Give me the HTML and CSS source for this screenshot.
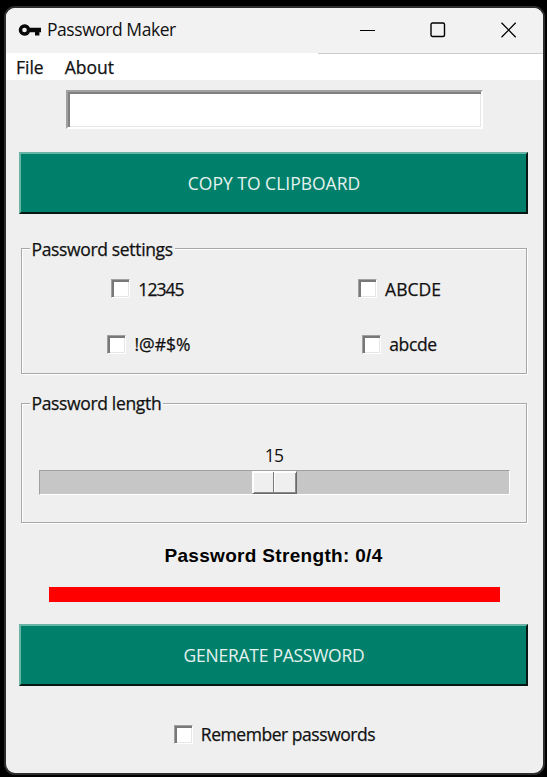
FILE: index.html
```html
<!DOCTYPE html>
<html lang="en">
<head>
<meta charset="utf-8">
<title>Password Maker</title>
<link rel="stylesheet" href="styles.css">
</head>
<body>
<div class="window">
  <header class="titlebar">
    <svg class="key" width="24" height="16" viewBox="0 0 24 16"><path fill="#080808" fill-rule="evenodd" d="M6.5 2.2C9 2.2 11 3.4 11.8 5.8H23V10.2H21.4V13.5H17V10.2H11.8C11 12.6 9 13.8 6.5 13.8A5.8 5.8 0 0 1 6.5 2.2ZM6.5 5.7A2.3 2.3 0 1 0 6.5 10.3A2.3 2.3 0 0 0 6.5 5.7Z"/></svg>
    <span class="title">Password Maker</span>
    <div class="controls">
      <svg width="16" height="16" viewBox="0 0 16 16"><path d="M1 8.5H16" stroke="#000"/></svg>
      <svg width="16" height="16" viewBox="0 0 16 16"><rect x="1" y="1" width="13.5" height="13.5" rx="1.5" fill="none" stroke="#000" stroke-width="1.4"/></svg>
      <svg width="16" height="16" viewBox="0 0 16 16"><path d="M.5 .8L14.7 15.2M14.7 .8L.5 15.2" stroke="#000" stroke-width="1.3"/></svg>
    </div>
  </header>
  <nav class="menu"><span class="file">File</span><span class="about">About</span></nav>
  <main class="content">
    <input class="entry" type="text" aria-label="Password">
    <button class="action copy"><span>COPY TO CLIPBOARD</span></button>
    <section class="group settings">
      <h2 class="legend">Password settings</h2>
      <div class="options">
        <label class="check"><i class="box"></i><span class="digits">12345</span></label>
        <label class="check"><i class="box"></i><span class="upper">ABCDE</span></label>
        <label class="check symbols"><i class="box"></i><span>!@#$%</span></label>
        <label class="check"><i class="box"></i><span class="lower">abcde</span></label>
      </div>
    </section>
    <section class="group length">
      <h2 class="legend">Password length</h2>
      <div class="value">15</div>
      <div class="trough"><div class="knob"><i></i><i></i></div></div>
    </section>
    <p class="strength">Password Strength: 0/4</p>
    <div class="meter"></div>
    <button class="action generate"><span>GENERATE PASSWORD</span></button>
    <label class="check remember"><i class="box"></i><span>Remember passwords</span></label>
  </main>
</div>
</body>
</html>
```

FILE: styles.css
```css
* { box-sizing: border-box; }
body {
  margin: 0;
  padding: 6px 2px 2px 4px;
  height: 777px;
  background: #000;
  color: #111;
  font: 17.5px/24px "Open Sans", "Noto Sans", sans-serif;
  overflow: hidden;
}
.window {
  width: 541px;
  height: 769px;
  border: 2px solid #2d2d2d;
  border-radius: 11px;
  background: #efefef;
  overflow: hidden;
}
.titlebar {
  display: flex;
  align-items: center;
  height: 45px;
  padding: 0 26px 0 12px;
  background: #f2f2f2;
}
.key { margin-top: -2px; }
.title { margin: -3px 0 0 5px; letter-spacing: -.45px; white-space: nowrap; }
.controls { display: flex; gap: 55px; margin: -2px 0 0 auto; }
.menu {
  display: flex;
  gap: 21px;
  height: 27px;
  padding: 2px 0 0 10px;
  background: linear-gradient(#ccc, #ccc) 312px 0 / 225px 1px no-repeat #fff;
  -webkit-text-stroke: .25px;
}
.content {
  display: flex;
  flex-direction: column;
  align-items: center;
  padding-right: 2px;
}
.entry {
  width: 417px;
  height: 39px;
  margin: 10px 0 0 1px;
  border: 2px solid;
  border-color: #a0a0a0 #fff #fff #a0a0a0;
  outline: 0;
  background: #fff;
  box-shadow: inset 2px 2px #808080, inset -1px -1px #e6e6e6;
}
.action {
  width: 509px;
  height: 62px;
  padding: 0 0 1px 1px;
  border: 2px solid;
  border-color: #69b5a5 #071713 #071713 #69b5a5;
  background: #00806a;
  color: #e4f2ef;
  font: inherit;
}
.copy { margin-top: 23px; }
.group {
  width: 506px;
  border: 1px solid #a8a8a8;
  box-shadow: 1px 1px #fff, inset 1px 1px #fff;
}
.legend {
  width: max-content;
  height: 24px;
  margin: -12px 0 0 8px;
  padding: 0 2px;
  background: #efefef;
  font: inherit;
  letter-spacing: -.34px;
  -webkit-text-stroke: .25px;
}
.settings { height: 126px; margin-top: 34px; }
.options { display: grid; grid-template-columns: 252px 252px; grid-template-rows: 55px 56px; }
.check {
  display: flex;
  align-items: center;
  justify-content: center;
  gap: 8px;
  -webkit-text-stroke: .25px;
}
.box {
  width: 19px;
  height: 19px;
  border: 1px solid;
  border-color: #a0a0a0 #fff #fff #a0a0a0;
  background: #fff;
  box-shadow: inset 2px 2px #787878, inset -1px -1px #e6e6e6;
}
.digits { letter-spacing: -.95px; }
.symbols { padding-left: 3px; }
.lower { letter-spacing: -.35px; }
.length { height: 120px; margin-top: 29px; }
.length .legend { margin-top: -13px; }
.value {
  height: 24px;
  margin-top: 28px;
  padding-left: 1px;
  text-align: center;
  letter-spacing: -.8px;
}
.trough {
  width: 471px;
  height: 25px;
  margin: 3px 0 0 17px;
  padding-left: 212px;
  border: 1px solid;
  border-color: #a0a0a0 #fff #fff #a0a0a0;
  background: #c6c6c6;
}
.knob {
  display: flex;
  width: 45px;
  height: 23px;
  border: 1px solid;
  border-color: #fff #696969 #696969 #fff;
  background: #efefef;
  box-shadow: inset 1px 1px #fff, inset -1px -1px #888;
}
.knob i { width: 22px; height: 20px; border-left: 1px solid #fff; border-right: 1px solid #777; }
.knob i + i { border-right: 0; }
.strength {
  height: 24px;
  margin: 21px 0 0;
  color: #000;
  font: bold 19px/24px "Liberation Sans", sans-serif;
  letter-spacing: .32px;
}
.meter { width: 451px; height: 15px; margin: 19px 0 0 2px; background: #f00; }
.generate { margin-top: 22px; padding-bottom: 0; letter-spacing: -.25px; }
.remember { margin-top: 36px; padding-left: 2px; letter-spacing: -.45px; }
```
